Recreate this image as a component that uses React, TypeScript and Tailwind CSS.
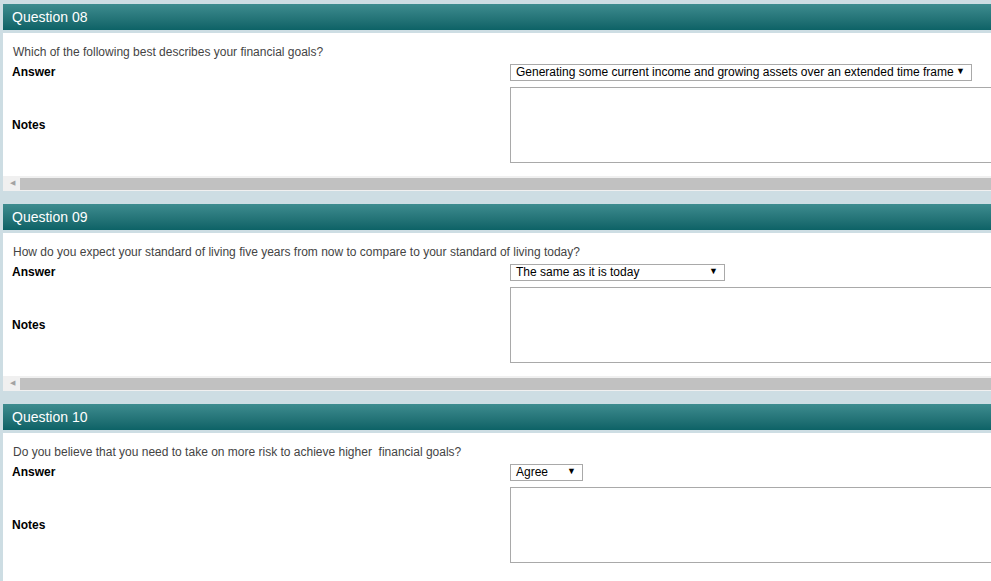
import React from 'react'

type Q = {
  title: string
  question: string
  answer: string
  selectWidth: string
}

const questions: Q[] = [
  {
    title: 'Question 08',
    question: 'Which of the following best describes your financial goals?',
    answer: 'Generating some current income and growing assets over an extended time frame',
    selectWidth: 'w-[462px]',
  },
  {
    title: 'Question 09',
    question: 'How do you expect your standard of living five years from now to compare to your standard of living today?',
    answer: 'The same as it is today',
    selectWidth: 'w-[215px]',
  },
  {
    title: 'Question 10',
    question: 'Do you believe that you need to take on more risk to achieve higher  financial goals?',
    answer: 'Agree',
    selectWidth: 'w-[73px]',
  },
]

function Section({ q, last }: { q: Q; last: boolean }) {
  return (
    <div className="mb-[13px]">
      <div className="h-[26px] flex items-center pl-[9px] text-white text-[14px] bg-gradient-to-b from-[#3d8c8f] to-[#0c6266]">
        {q.title}
      </div>
      <div className="mt-[3px] bg-white">
        <div className="pt-[12px] pl-[10px] text-[12px] leading-[14px] text-[#444]">
          <span className="whitespace-pre">{q.question}</span>
        </div>
        <div className="flex items-center pl-[9px] mt-[4px]">
          <div className="w-[498px] shrink-0 text-[12px] font-bold text-black">Answer</div>
          <div
            className={`${q.selectWidth} shrink-0 h-[17px] border border-[#a9a9a9] flex items-center justify-between pl-[5px] pr-[6px] text-[12px] text-black whitespace-nowrap`}
          >
            <span>{q.answer}</span>
            <span className="text-[9px]">▼</span>
          </div>
        </div>
        <div className={`flex pl-[9px] mt-[6px] ${last ? 'pb-[30px]' : 'pb-[13px]'}`}>
          <div className="w-[498px] shrink-0 flex items-center text-[12px] font-bold text-black">Notes</div>
          <div className="w-[600px] shrink-0 h-[76px] border border-[#a9a9a9]" />
        </div>
        {!last && (
          <div className="h-[15px] bg-[#f0f0f0] flex items-center">
            <span className="w-[17px] flex justify-center text-[#a3a3a3] text-[7px] pl-[1px]">◀</span>
            <div className="flex-1 h-[12px] bg-[#c1c1c1]" />
          </div>
        )}
      </div>
    </div>
  )
}

export default function App() {
  return (
    <div
      className="w-[991px] h-[581px] overflow-hidden bg-[#cddde3] pt-[4px] pl-[3px]"
      style={{ fontFamily: '"Liberation Sans", Arial, sans-serif' }}
    >
      {questions.map((q, i) => (
        <Section key={q.title} q={q} last={i === questions.length - 1} />
      ))}
    </div>
  )
}
